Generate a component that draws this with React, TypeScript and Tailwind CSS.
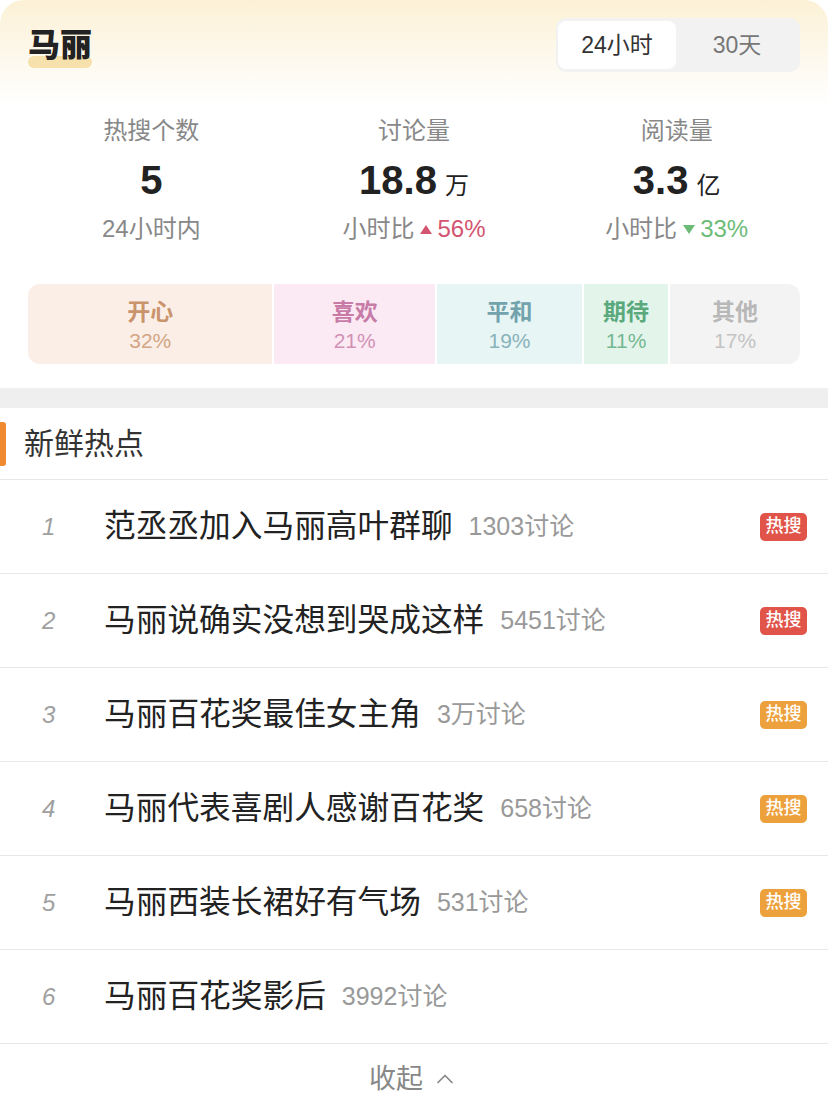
import { ChevronUp } from "lucide-react";

const font = { fontFamily: '"Liberation Sans", "Noto Sans CJK SC", sans-serif' };

const stats = [
  { label: "热搜个数", value: "5", unit: "", sub: "24小时内" },
  { label: "讨论量", value: "18.8", unit: "万", sub: "小时比", trend: "up", pct: "56%" },
  { label: "阅读量", value: "3.3", unit: "亿", sub: "小时比", trend: "down", pct: "33%" },
];

const moods = [
  { name: "开心", pct: 32, bg: "bg-[#fbeee6]", fg: "text-[#c9936c]" },
  { name: "喜欢", pct: 21, bg: "bg-[#fbeaf3]", fg: "text-[#c87ba7]" },
  { name: "平和", pct: 19, bg: "bg-[#e8f5f5]", fg: "text-[#72a3ac]" },
  { name: "期待", pct: 11, bg: "bg-[#e3f4eb]", fg: "text-[#5aa97c]" },
  { name: "其他", pct: 17, bg: "bg-[#f3f3f3]", fg: "text-[#b8b8b8]" },
];

const topics = [
  { title: "范丞丞加入马丽高叶群聊", count: "1303讨论", badge: "red" },
  { title: "马丽说确实没想到哭成这样", count: "5451讨论", badge: "red" },
  { title: "马丽百花奖最佳女主角", count: "3万讨论", badge: "orange" },
  { title: "马丽代表喜剧人感谢百花奖", count: "658讨论", badge: "orange" },
  { title: "马丽西装长裙好有气场", count: "531讨论", badge: "orange" },
  { title: "马丽百花奖影后", count: "3992讨论", badge: "" },
];

export default function App() {
  return (
    <div className="w-[828px] min-h-[1114px] bg-white" style={font}>
      {/* header card */}
      <div className="rounded-t-[24px] bg-[linear-gradient(180deg,#fcf1d6_0px,#fdf7e8_45px,#ffffff_105px)] pb-[24px]">
        <div className="flex items-start justify-between px-[28px] pt-[18px]">
          <div className="relative mt-[9px]">
            <div className="absolute left-0 right-0 top-[29px] h-[12px] rounded-full bg-[#f6e1ad]" />
            <span className="relative text-[32px] font-black leading-[36px] text-[#222]">马丽</span>
          </div>
          <div className="flex h-[54px] w-[244px] items-center rounded-[10px] bg-[#f2f2f2] p-[2px]">
            <div className="flex h-[48px] w-[118px] items-center justify-center rounded-[8px] bg-white text-[23px] text-[#333]">
              24小时
            </div>
            <div className="flex flex-1 items-center justify-center text-[23px] text-[#777]">30天</div>
          </div>
        </div>

        <div className="mt-[44px] grid grid-cols-3 px-[20px]">
          {stats.map((s) => (
            <div key={s.label} className="flex flex-col items-center">
              <div className="text-[24px] leading-[30px] text-[#888]">{s.label}</div>
              <div className="mt-[14px] flex h-[46px] items-baseline leading-[40px] text-[#222]">
                <span className="text-[40px] font-bold">{s.value}</span>
                {s.unit && <span className="ml-[8px] text-[24px]">{s.unit}</span>}
              </div>
              <div className="mt-[8px] flex items-center text-[24px] leading-[30px] text-[#888]">
                <span>{s.sub}</span>
                {s.trend === "up" && (
                  <span className="ml-[6px] flex items-center text-[#d35470]">
                    <span className="mr-[5px] inline-block h-0 w-0 border-x-[6px] border-b-[9px] border-x-transparent border-b-[#d35470]" />
                    {s.pct}
                  </span>
                )}
                {s.trend === "down" && (
                  <span className="ml-[6px] flex items-center text-[#6cbc78]">
                    <span className="mr-[5px] inline-block h-0 w-0 border-x-[6px] border-t-[9px] border-x-transparent border-t-[#6cbc78]" />
                    {s.pct}
                  </span>
                )}
              </div>
            </div>
          ))}
        </div>

        <div className="mx-[28px] mt-[40px] flex h-[80px] gap-[2px] overflow-hidden rounded-[12px]">
          {moods.map((m) => (
            <div
              key={m.name}
              className={`flex flex-col items-center justify-center pt-[5px] ${m.bg}`}
              style={{ width: `${m.pct}%` }}
            >
              <div className={`text-[23px] font-semibold leading-[28px] ${m.fg}`}>{m.name}</div>
              <div className={`text-[21px] leading-[30px] opacity-80 ${m.fg}`}>{m.pct}%</div>
            </div>
          ))}
        </div>
      </div>

      <div className="h-[20px] bg-[#efefef]" />

      {/* fresh topics */}
      <div className="flex h-[72px] items-center border-b border-[#e8e8e8]">
        <div className="h-[44px] w-[6px] rounded-r-[3px] bg-[#f08a30]" />
        <div className="ml-[18px] text-[30px] text-[#333]">新鲜热点</div>
      </div>

      {topics.map((t, i) => (
        <div key={t.title} className="flex h-[94px] items-center border-b border-[#e8e8e8] pr-[21px]">
          <div className="w-[104px] pl-[42px] text-[24px] italic text-[#a0a0a0]">{i + 1}</div>
          <div className="text-[31.7px] text-[#222]">{t.title}</div>
          <div className="ml-[16px] text-[25px] text-[#999]">{t.count}</div>
          <div className="flex-1" />
          {t.badge && (
            <div
              className={`flex h-[28px] w-[47px] items-center justify-center rounded-[5px] text-[18px] font-medium text-white ${
                t.badge === "red" ? "bg-[#e0544a]" : "bg-[#eda13c]"
              }`}
            >
              热搜
            </div>
          )}
        </div>
      ))}

      <div className="flex h-[70px] items-center justify-center text-[27px] text-[#888]">
        <span>收起</span>
        <ChevronUp className="ml-[8px] h-[28px] w-[28px]" strokeWidth={1.5} />
      </div>
    </div>
  );
}
